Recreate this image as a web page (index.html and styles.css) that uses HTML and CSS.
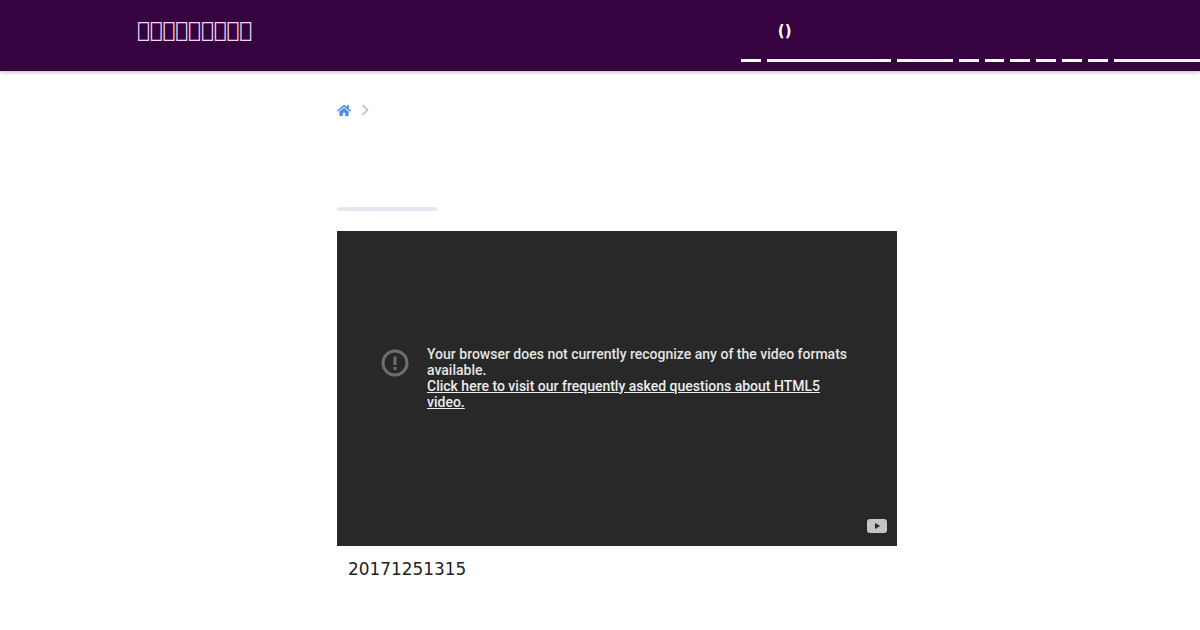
FILE: index.html
```html
<!DOCTYPE html>
<html lang="en">
<head>
<meta charset="utf-8">
<title>Video</title>
<link rel="stylesheet" href="styles.css">
</head>
<body>
<header class="topbar">
  <a class="brand" href="#">&#xE000;&#xE001;&#xE002;&#xE003;&#xE004;&#xE005;&#xE006;&#xE007;&#xE008;</a>
  <nav class="nav">
    <a class="nav-item w20" href="#"></a>
    <a class="nav-item w124" href="#"><span class="nav-label">()</span></a>
    <a class="nav-item w56" href="#"></a>
    <a class="nav-item w20" href="#"></a>
    <a class="nav-item w20" href="#"></a>
    <a class="nav-item w20" href="#"></a>
    <a class="nav-item w20" href="#"></a>
    <a class="nav-item w20" href="#"></a>
    <a class="nav-item w20" href="#"></a>
    <a class="nav-item w86" href="#"></a>
  </nav>
</header>
<main class="content">
  <div class="crumbs">
    <svg class="home" viewBox="0 0 576 512" aria-hidden="true"><path fill="currentColor" d="M280.4 148.300 96 300.100V464a16 16 0 0 0 16 16l112-.3a16 16 0 0 0 15.900-16V368a16 16 0 0 1 16-16h64a16 16 0 0 1 16 16v95.600a16 16 0 0 0 16 16.100l112 .3a16 16 0 0 0 16-16V300L295.700 148.300a12.200 12.200 0 0 0-15.300 0zM571.600 251.500 488 182.600V44.100a12 12 0 0 0-12-12h-56a12 12 0 0 0-12 12v72.600L318.500 43a48 48 0 0 0-61 0L4.300 251.500a12 12 0 0 0-1.600 16.900l25.500 31a12 12 0 0 0 16.900 1.600l235.200-193.700a12.200 12.200 0 0 1 15.300 0L530.900 301a12 12 0 0 0 16.900-1.600l25.500-31a12 12 0 0 0-1.700-16.900z"/></svg>
    <svg class="chev" viewBox="0 0 8 12" aria-hidden="true"><path d="M1.500 1 6.500 6l-5 5" fill="none" stroke="currentColor" stroke-width="1.600"/></svg>
  </div>
  <div class="rule"></div>
  <section class="player">
    <div class="error">
      <svg class="error-icon" viewBox="0 0 28 28" aria-hidden="true"><circle cx="14" cy="14" r="12" fill="none" stroke="currentColor" stroke-width="3"/><rect x="12.500" y="7.500" width="3" height="8.500" fill="currentColor"/><rect x="12.500" y="18" width="3" height="3" fill="currentColor"/></svg>
      <div class="error-text">
        <span>Your browser does not currently recognize any of the video formats available.</span><br>
        <a href="#">Click here to visit our frequently asked questions about HTML5 video.</a>
      </div>
    </div>
    <svg class="yt" viewBox="0 0 20 14" aria-hidden="true"><path fill="currentColor" d="M3 0h14a3 3 0 0 1 3 3v8a3 3 0 0 1-3 3H3a3 3 0 0 1-3-3V3a3 3 0 0 1 3-3z"/><path fill="#282828" d="M8 4l5.200 3L8 10z"/></svg>
  </section>
  <p class="caption">20171251315</p>
</main>
</body>
</html>
```
FILE: styles.css
```css
* { box-sizing: border-box; }
html, body { margin: 0; height: 100%; overflow: hidden; background: #fff; }
body { font-family: "DejaVu Sans", sans-serif; }
.topbar {
  height: 71px;
  background: #360340;
  box-shadow: 0 1px 4px rgba(0, 0, 0, .3);
  display: flex;
  padding-left: 137px;
}
.brand { width: 604px; flex: none; color: #eedcf2; font-size: 21.3px; line-height: 60px; text-decoration: none; white-space: nowrap; font-family: "DejaVu Sans", sans-serif; }
.nav { display: flex; gap: 6px; flex: none; height: 62px; }
.nav-item { display: block; flex: none; height: 62px; border-bottom: 3px solid #fff; padding-left: 11px; text-decoration: none; }
.w20 { width: 19.84px; }
.w56 { width: 56px; }
.w86 { width: 86px; }
.w124 { width: 124px; }
.nav-label { color: #fff; font-family: "DejaVu Sans", sans-serif; font-size: 15px; font-weight: 700; line-height: 62px; }
.content { margin-left: 337px; width: 560px; }
.crumbs { display: flex; align-items: center; gap: 10px; height: 16px; margin-top: 31px; color: #4a90e2; }
.home { width: 14px; height: 13px; color: #4a8fe8; }
.chev { width: 8px; height: 12px; color: #bbb; }
.rule { width: 100px; height: 4px; margin-top: 89px; background: #e6e8f0; border-radius: 2px; }
.player { position: relative; height: 315px; margin-top: 20px; background: #282828; display: flex; align-items: center; }
.error { display: flex; align-items: flex-start; padding: 0 44px 22px; color: #fff; }
.error-icon { width: 28px; height: 28px; flex: none; color: #6e6e6e; margin-right: 18px; margin-top: 3px; }
.error-text { font-family: Roboto, sans-serif; font-size: 14px; font-weight: 500; line-height: 16px; color: #e4e4e4; }
.error-text a { color: #ececec; text-decoration: underline; }
.yt { position: absolute; right: 10px; bottom: 13px; width: 20px; height: 14px; color: #c4c4c4; }
.caption { margin: 12px 0 0 11px; color: #222; font-size: 16.9px; line-height: 22px; }
```
